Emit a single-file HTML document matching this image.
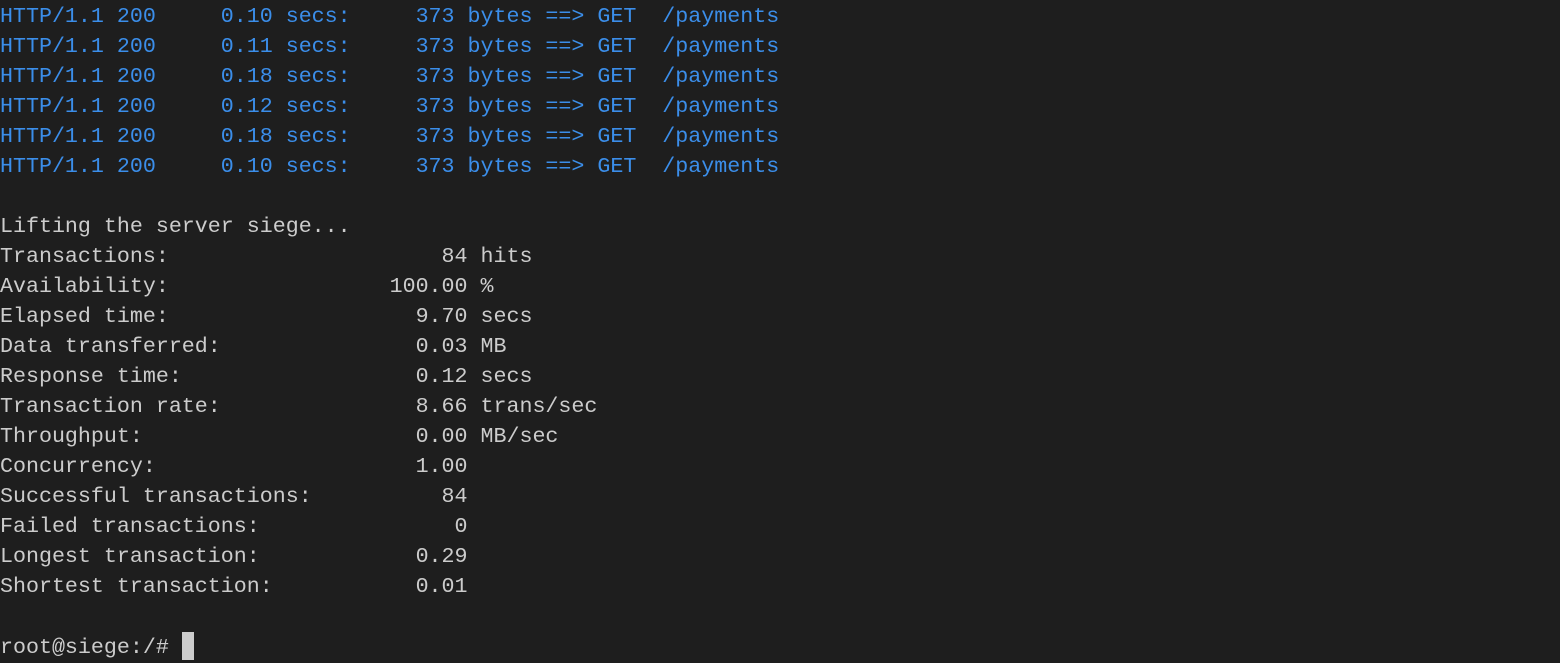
<!DOCTYPE html>
<html><head><meta charset="utf-8"><style>
html,body{margin:0;padding:0;background:#1e1e1e;width:1560px;height:661px;overflow:hidden}
pre{margin:0;padding:0;position:absolute;left:0;top:2px;font-family:"Liberation Mono","DejaVu Sans Mono",monospace;font-size:21.65px;line-height:30px;color:#cccccc;white-space:pre}
.b{color:#3b8eea}
.cur{display:inline-block;width:12px;height:28px;background:#cccccc;vertical-align:-7px}
</style></head><body><pre><span class="b">HTTP/1.1 200     0.10 secs:     373 bytes ==> GET  /payments
HTTP/1.1 200     0.11 secs:     373 bytes ==> GET  /payments
HTTP/1.1 200     0.18 secs:     373 bytes ==> GET  /payments
HTTP/1.1 200     0.12 secs:     373 bytes ==> GET  /payments
HTTP/1.1 200     0.18 secs:     373 bytes ==> GET  /payments
HTTP/1.1 200     0.10 secs:     373 bytes ==> GET  /payments</span>

Lifting the server siege...
Transactions:                     84 hits
Availability:                 100.00 %
Elapsed time:                   9.70 secs
Data transferred:               0.03 MB
Response time:                  0.12 secs
Transaction rate:               8.66 trans/sec
Throughput:                     0.00 MB/sec
Concurrency:                    1.00
Successful transactions:          84
Failed transactions:               0
Longest transaction:            0.29
Shortest transaction:           0.01

root@siege:/# <span class="cur"></span></pre></body></html>
